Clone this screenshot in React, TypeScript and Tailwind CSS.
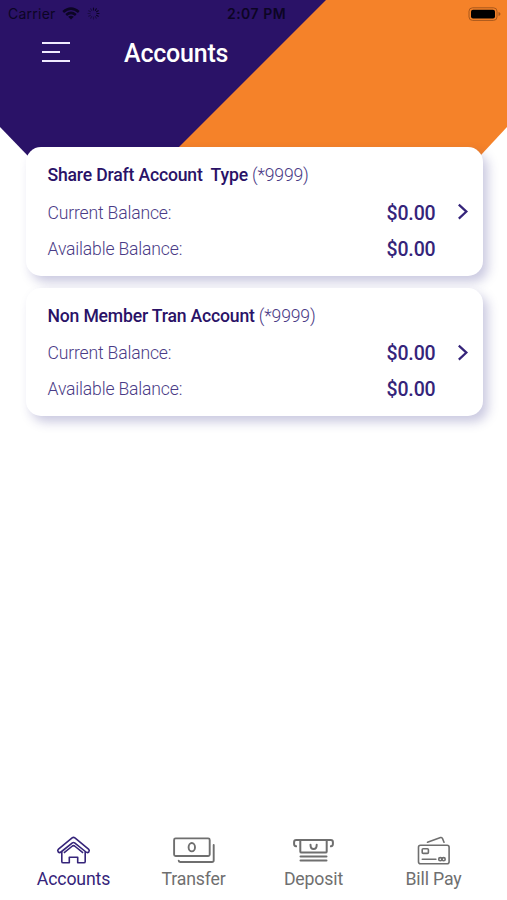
import type { ReactNode } from 'react';

interface Account {
  name: string;
  mask: string;
  current: string;
  available: string;
}

const accounts: Account[] = [
  { name: 'Share Draft Account  Type', mask: '(*9999)', current: '$0.00', available: '$0.00' },
  { name: 'Non Member Tran Account', mask: '(*9999)', current: '$0.00', available: '$0.00' },
];

export default function App() {
  return (
    <div className="flex h-[900px] w-[507px] flex-col overflow-hidden bg-white font-['Roboto',sans-serif]">
      <header className="h-[156px] shrink-0 bg-[linear-gradient(135deg,#2a1267_230px,#f58229_231px)] [clip-path:polygon(0_0,100%_0,100%_127px,481px_155px,480px_156px,28px_156px,0_127px)]">
        <StatusBar />
        <div className="flex h-[50px] items-center pl-[42px]">
          <button aria-label="Menu" className="flex h-5 w-7 flex-col justify-between">
            <span className="h-[2px] w-7 bg-[#f0eaff]" />
            <span className="h-[2px] w-[18px] bg-[#f0eaff]" />
            <span className="h-[2px] w-7 bg-[#f0eaff]" />
          </button>
          <h1 className="mt-[3px] ml-[54px] text-[25px] font-medium tracking-[-0.2px] text-white">Accounts</h1>
        </div>
      </header>

      <main className="relative -mt-[9px] flex flex-1 flex-col gap-3 pr-[24.5px] pl-[26px]">
        {accounts.map((account) => (
          <AccountCard key={account.name} account={account} />
        ))}
      </main>

      <nav className="flex h-[68px] shrink-0 px-[13.5px]">
        <Tab label="Accounts" active>
          <HouseIcon />
        </Tab>
        <Tab label="Transfer">
          <TransferIcon />
        </Tab>
        <Tab label="Deposit">
          <DepositIcon />
        </Tab>
        <Tab label="Bill Pay">
          <BillPayIcon />
        </Tab>
      </nav>
    </div>
  );
}

function StatusBar() {
  return (
    <div className="grid h-[27px] grid-cols-[1fr_auto_1fr] items-center pr-[6px] pl-[8px] font-['Inter',sans-serif] text-[14px] text-[#0c0524]">
      <div className="flex items-center">
        <span className="w-[48px] tracking-[0.25px] whitespace-nowrap">Carrier</span>
        <svg className="ml-[6px]" width="18" height="13" viewBox="0 0 18 13" fill="none" stroke="currentColor" strokeWidth="2.5">
          <path d="M1.2 5 Q9 -1.8 16.8 5" />
          <path d="M4.2 8 Q9 3.8 13.8 8" />
          <path d="M9 12.5 L6.2 9.7 Q9 7.6 11.8 9.7 Z" fill="currentColor" stroke="none" />
        </svg>
        <svg className="ml-[7px]" width="13" height="13" viewBox="0 0 13 13" fill="none" stroke="currentColor" strokeWidth="1.1" strokeLinecap="round">
          <path d="M6.5 1v2M9.3 1.7l-1 1.8M11.3 3.7l-1.8 1M12 6.5h-2M11.3 9.3l-1.8-1" />
          <path d="M9.3 11.3l-1-1.8M6.5 12v-2M3.7 11.3l1-1.8M1.7 9.3l1.8-1M1 6.5h2M1.7 3.7l1.8 1M3.7 1.7l1 1.8" opacity=".5" />
        </svg>
      </div>
      <span className="pl-[4px] font-semibold tracking-[0.5px]">2:07 PM</span>
      <svg className="justify-self-end" width="33" height="14" viewBox="0 0 33 14" fill="none">
        <rect x="1" y=".8" width="28" height="12.6" rx="3.5" stroke="#a8581c" />
        <rect x="3" y="2.8" width="24" height="8.6" rx="2" fill="#000" />
        <path d="M30.5 5v4q2-.6 2-2t-2-2Z" fill="#a8581c" />
      </svg>
    </div>
  );
}

function AccountCard({ account }: { account: Account }) {
  return (
    <section className="flex h-[128.5px] items-start rounded-[15px] bg-white pt-[10px] pr-[14px] pl-[21.5px] shadow-[5px_6px_11px_rgba(42,40,130,0.25)]">
      <div className="flex-1">
        <h2 className="h-[38px] text-[17.6px] leading-[37px] font-light tracking-[-0.18px] whitespace-pre text-[#4a3b86]">
          <span className="font-medium text-[#2a1267]">{account.name}</span> {account.mask}
        </h2>
        <BalanceRow label="Current Balance:" value={account.current} />
        <BalanceRow label="Available Balance:" value={account.available} />
      </div>
      <svg className="mt-[46px] ml-[21px]" width="12" height="18" viewBox="0 0 12 18" fill="none" stroke="#35247a" strokeWidth="2.2">
        <path d="m1.8 1.6 7.6 7-7.6 7" />
      </svg>
    </section>
  );
}

function BalanceRow({ label, value }: { label: string; value: string }) {
  return (
    <div className="flex h-9 items-center justify-between">
      <span className="text-[17.6px] font-light tracking-[-0.18px] text-[#4a3b86]">{label}</span>
      <span className="pt-px text-[19.5px] font-medium tracking-[-0.15px] text-[#35247a]">{value}</span>
    </div>
  );
}

interface TabProps {
  label: string;
  active?: boolean;
  children: ReactNode;
}

function Tab({ label, active, children }: TabProps) {
  return (
    <button
      className={`flex w-[120px] flex-col items-center pt-[3px] ${active ? 'text-[#35247a]' : 'text-[#6f6f6f]'}`}
    >
      {children}
      <span className="mt-[2px] text-[17.7px] leading-[22px] tracking-[-0.15px]">{label}</span>
    </button>
  );
}

function HouseIcon() {
  return (
    <svg width="44" height="31" viewBox="0.5 0 44 31" fill="none" stroke="currentColor" strokeWidth="1.6" strokeLinejoin="round">
      <path d="M20.6 2.9q1.4-1.1 2.8 0L37 14.2q1.4 1.3.3 2.7-1.3 1.3-2.8.1L23.1 7.9q-1.1-.8-2.2 0L9.5 17q-1.5 1.2-2.8-.1-1.1-1.4.3-2.7Z" />
      <path d="M10.3 16.6v9.8q0 1.4 1.4 1.4h6.1v-5.6h8.4v5.6h6.1q1.4 0 1.4-1.4v-9.8M12.4 17.8l8.5-6.8q1.1-.8 2.2 0l8.5 6.8" />
    </svg>
  );
}

function TransferIcon() {
  return (
    <svg width="44" height="31" viewBox="0.5 0 44 31" fill="none" stroke="currentColor" strokeWidth="1.9" strokeLinecap="round">
      <rect x="2.6" y="3.4" width="35.6" height="17.6" rx="1.5" />
      <ellipse cx="20.3" cy="12.2" rx="3.2" ry="4.2" />
      <path d="M42.2 10v15.2q0 1.8-1.8 1.8H8.6q-1.4 0-1.4-1.4" />
    </svg>
  );
}

function DepositIcon() {
  return (
    <svg width="44" height="31" viewBox="0.5 0 44 31" fill="none" stroke="currentColor" strokeWidth="2" strokeLinecap="round">
      <path d="M4.6 11.3Q2.6 11 2.6 8.9V7.1Q2.6 5 4.7 5h34.6q2.1 0 2.1 2.1v1.8q0 2.1-2 2.4" />
      <path d="M8.8 6v10.4q0 1.2 1.2 1.2h24q1.2 0 1.2-1.2V6M19 9.8q0 4.2 3.1 4.2t3.1-4.2" />
      <path d="M9 21.6h26M9 25.6h26" />
    </svg>
  );
}

function BillPayIcon() {
  return (
    <svg width="44" height="31" viewBox="1 0 44 31" fill="none" stroke="currentColor" strokeWidth="1.6" strokeLinecap="round" strokeLinejoin="round">
      <rect x="7.5" y="10.2" width="30.6" height="18.6" rx="2" />
      <rect x="11.2" y="13.8" width="6.2" height="4.6" rx="1" />
      <path d="M16.5 7.2 29.6 2.6q1.4-.4 1.9.9l1.5 3.7M11.3 24.2h13.6" />
      <circle cx="29.3" cy="24.2" r="1.6" />
      <circle cx="32.6" cy="24.2" r="1.6" />
    </svg>
  );
}
